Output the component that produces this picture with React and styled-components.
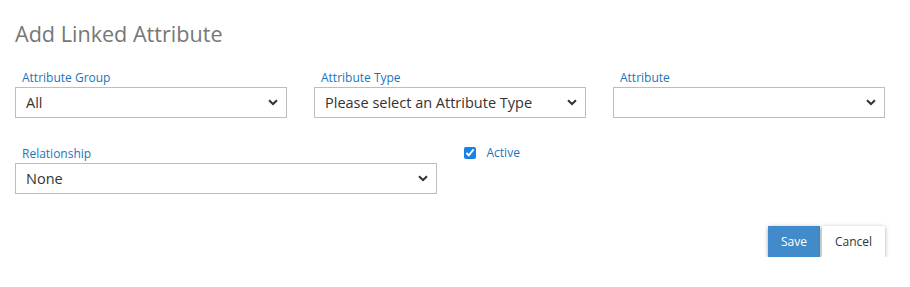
import React, { useState } from 'react';
import styled, { createGlobalStyle } from 'styled-components';

const GlobalStyle = createGlobalStyle`
  body {
    margin: 0;
    background: #fff;
    font-family: "Open Sans", "Noto Sans", sans-serif;
  }
`;

const Container = styled.div`
  width: 910px;
  padding: 18px 25px 0 15px;
  box-sizing: border-box;
`;

const Title = styled.h1`
  margin: 0 0 19px 0;
  font-size: 21.6px;
  font-weight: 400;
  line-height: 32px;
  color: #777;
`;

const Row = styled.div`
  display: grid;
  grid-template-columns: repeat(${p => p.cols}, 1fr);
  column-gap: 27px;
  margin-bottom: ${p => p.gap || 0}px;
`;

const Field = styled.div`
  display: flex;
  flex-direction: column;
`;

const Label = styled.label`
  display: block;
  padding-left: 7px;
  font-size: 12px;
  line-height: 17px;
  color: #1a75bb;
  margin-bottom: 1px;
`;

const SelectWrap = styled.div`
  position: relative;
`;

const Select = styled.select`
  appearance: none;
  width: 100%;
  height: 31px;
  padding: 0 30px 0 10px;
  border: 1px solid #bdbdbd;
  border-radius: 0;
  background: #fff;
  font-family: inherit;
  font-size: 14.5px;
  color: #333;
  outline: none;
`;

const Chevron = styled.svg`
  position: absolute;
  right: 9px;
  top: 12px;
  pointer-events: none;
`;

const CheckLabel = styled.label`
  display: flex;
  align-items: center;
  gap: 11px;
  margin-top: -1px;
  font-size: 12px;
  color: #1a75bb;
`;

const Checkbox = styled.input`
  margin: 0;
  width: 12px;
  height: 12px;
  accent-color: #1b7fe3;
`;

const Actions = styled.div`
  display: flex;
  justify-content: flex-end;
  gap: 2px;
  margin-top: 32px;
`;

const Button = styled.button`
  width: ${p => (p.primary ? 52 : 63)}px;
  height: 31px;
  padding: 0;
  border: none;
  font-family: inherit;
  font-size: 12px;
  background: ${p => (p.primary ? '#428bca' : '#fff')};
  color: ${p => (p.primary ? '#fff' : '#333')};
  box-shadow: 0 1px 4px rgba(0, 0, 0, 0.35);
  cursor: pointer;
`;

const DropField = ({ label, options, value }) => (
  <Field>
    <Label>{label}</Label>
    <SelectWrap>
      <Select defaultValue={value}>
        {options.map(o => (
          <option key={o}>{o}</option>
        ))}
      </Select>
      <Chevron width="10" height="7" viewBox="0 0 10 7">
        <path d="M1 1.2 L5 5 L9 1.2" fill="none" stroke="#333" strokeWidth="2" />
      </Chevron>
    </SelectWrap>
  </Field>
);

const App = () => {
  const [active, setActive] = useState(true);

  return (
    <Container>
      <GlobalStyle />
      <Title>Add Linked Attribute</Title>
      <Row cols={3} gap={27}>
        <DropField label="Attribute Group" options={['All']} value="All" />
        <DropField
          label="Attribute Type"
          options={['Please select an Attribute Type']}
          value="Please select an Attribute Type"
        />
        <DropField label="Attribute" options={['']} value="" />
      </Row>
      <Row cols={2}>
        <DropField label="Relationship" options={['None']} value="None" />
        <div>
          <CheckLabel>
            <Checkbox
              type="checkbox"
              checked={active}
              onChange={e => setActive(e.target.checked)}
            />
            Active
          </CheckLabel>
        </div>
      </Row>
      <Actions>
        <Button primary>Save</Button>
        <Button>Cancel</Button>
      </Actions>
    </Container>
  );
};

export default App;
